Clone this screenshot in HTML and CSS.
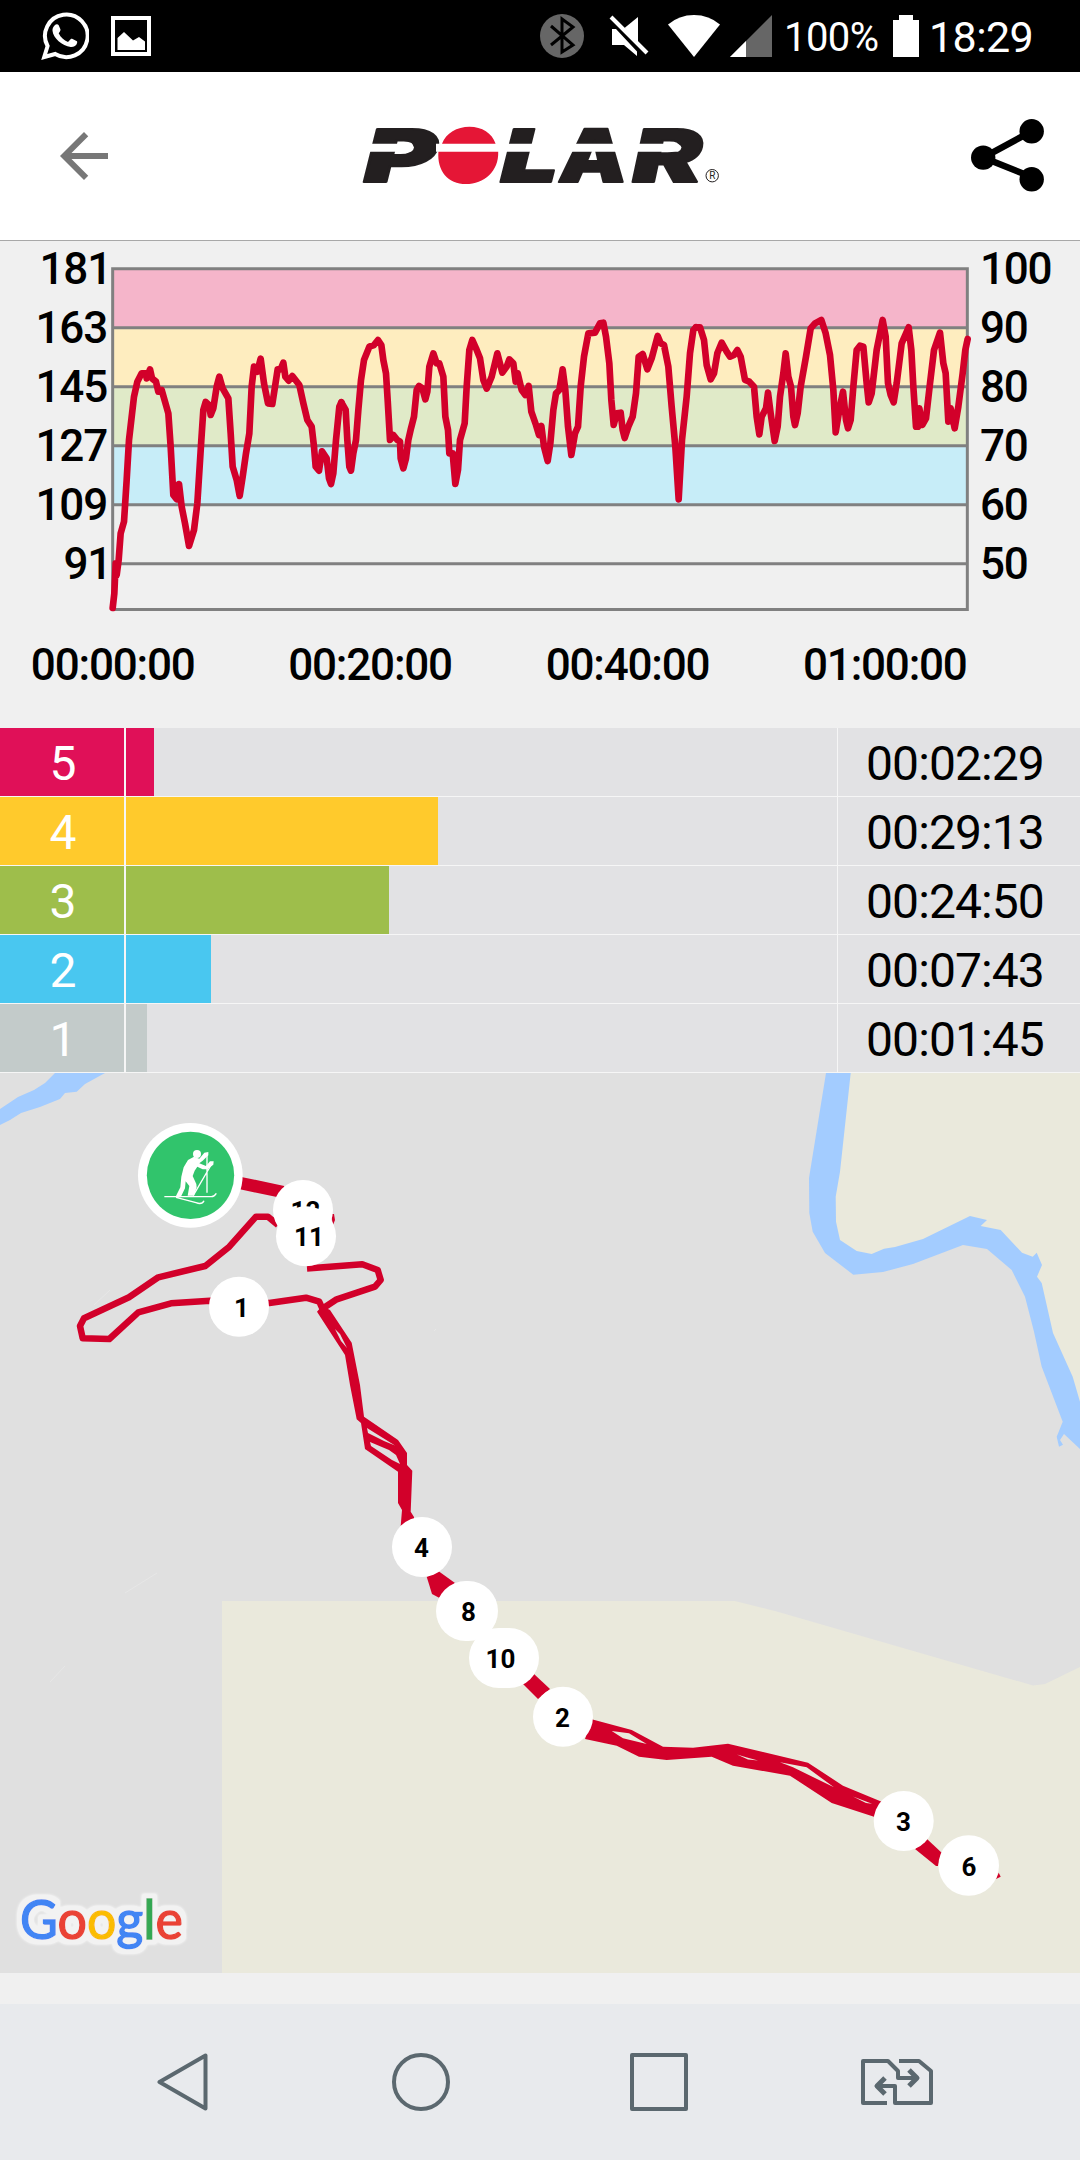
FILE: index.html
```html
<!DOCTYPE html>
<html lang="en">
<head>
<meta charset="utf-8">
<title>Polar training session</title>
<link rel="stylesheet" href="styles.css">
</head>
<body>
<div class="screen">
  <div class="status-bar">
    <div class="status-left">
      <svg class="whatsapp" width="48" height="48" viewBox="0 0 48 48">
        <path d="M3.2 45 6.6 34A21.3 21.3 0 1 1 14.200 42Z" fill="none" stroke="#fff" stroke-width="4"/>
        <path d="M13.500 13.500c1.500-1.800 3.500-1.700 4.200-.2l1.700 4c.4 1-.2 2-1.700 3.900 2 4.200 5.200 7.200 9.300 8.800l2.600-2.800c.6-.7 1.200-.6 2-.2l3.900 2c.8.4.8 1 .6 2-.6 2.700-3.600 4.200-6.400 4-8.500-1-17.600-9-18.200-16.200-.1-2 .5-3.800 2-5.300Z" fill="#fff"/>
      </svg>
      <svg class="gallery" width="40" height="40" viewBox="0 0 40 40">
        <path d="M2 2h36v36H2Z" fill="none" stroke="#fff" stroke-width="4"/>
        <path d="M6.500 34V22L13 16l9 8.500 6-3.500 6 4.500V34Z" fill="#fff"/>
      </svg>
    </div>
    <div class="status-right">
      <svg width="44" height="44" viewBox="0 0 44 44">
        <circle cx="22" cy="22" r="22" fill="#666"/>
        <path d="M11 12 33 31 22 38V5l11 8L11 31" fill="none" stroke="#000" stroke-width="3"/>
      </svg>
      <svg class="mute" width="40" height="42" viewBox="0 0 40 42">
        <path d="M3 14h4l21 22.500v4.500L15 30H3Z" fill="#fff"/>
        <path d="M29 2v26L15.500 13Z" fill="#fff"/>
        <path d="M2 2 38 38" stroke="#fff" stroke-width="4"/>
      </svg>
      <svg class="wifi" width="52" height="42" viewBox="0 0 52 42">
        <path d="M26 42 0 9.500Q11 0 26 0T52 9.500Z" fill="#fff"/>
      </svg>
      <svg class="signal" width="42" height="42" viewBox="0 0 42 42">
        <path d="M0 42 42 0V42Z" fill="#666"/><path d="M0 42 16 26V42Z" fill="#fff"/>
      </svg>
      <span class="percent">100%</span>
      <svg class="battery" width="26" height="42" viewBox="0 0 26 42">
        <path d="M0 5H6V0H20V5H26V42H0Z" fill="#fff"/>
      </svg>
      <span class="clock">18:29</span>
    </div>
  </div>

  <header class="app-bar">
    <svg class="back" width="72" height="72" viewBox="0 0 24 24"><path d="M20 11H7.830l5.590-5.590L12 4l-8 8 8 8 1.410-1.410L7.830 13H20Z" fill="#777"/></svg>
    <svg class="logo" width="362" height="64" viewBox="360 124 362 64">
      <g class="wordmark">
        <text transform="translate(359 182) skewX(-14) scale(1.250 1)" textLength="58" lengthAdjust="spacingAndGlyphs">P</text>
        <text transform="translate(496 182) skewX(-14) scale(1.250 1)" textLength="46" lengthAdjust="spacingAndGlyphs">L</text>
        <text transform="translate(557 182) skewX(-6) scale(1.250 1)" textLength="54" lengthAdjust="spacingAndGlyphs">A</text>
        <text transform="translate(628 182) skewX(-12) scale(1.250 1)" textLength="56" lengthAdjust="spacingAndGlyphs">R</text>
      </g>
      <path d="M358 143.700H411Q417 147.500 411 151.700H358ZM436 143.700H678Q685 147.500 678 151.700H436Z" fill="#fff"/>
      <path d="M442 143.700C446 133 457 126.700 469.500 126.700S492 133 495.600 143.700ZM438.400 151.700H498.200C499 171 484 184 466 184S437 171 438.400 151.700Z" fill="#e51636"/>
      <circle cx="712.200" cy="175.700" r="6.200" fill="none" stroke="#231f20" stroke-width="1"/>
      <text class="reg" x="712.300" y="179.300" text-anchor="middle">R</text>
    </svg>
    <svg class="share" width="76" height="76" viewBox="968 118 76 76">
      <path d="M1031.700 131.300 983.200 157.600 1031.700 177" fill="none" stroke="#000" stroke-width="6.500"/>
      <circle cx="983.200" cy="157.600" r="12.200"/><circle cx="1031.700" cy="131.300" r="12.200"/><circle cx="1031.700" cy="179.300" r="12.200"/>
    </svg>
  </header>

  <section class="chart">
    <div class="chart-body">
      <div class="axis axis-left"><span class="flush">181</span><span>163</span><span>145</span><span>127</span><span>109</span><span class="flush">91</span></div>
      <svg class="plot" width="858" height="344" viewBox="333 81 2574 1032">
        <path d="M338 86H2902V263H338Z" fill="#f5b5ca"/>
        <path d="M338 263H2902V440H338Z" fill="#feedbf"/>
        <path d="M338 440H2902V617H338Z" fill="#e0eac8"/>
        <path d="M338 617H2902V794H338Z" fill="#c7edf8"/>
        <path d="M338 794H2902V971H338Z" fill="#eeefee"/>
        <path d="M338 86H2902V1108.500H338ZM338 263H2902M338 440H2902M338 617H2902M338 794H2902M338 971H2902" fill="none" stroke="#808080" stroke-width="9"/>
        <g class="pulse">
          <polyline points="338,1104 343,1060 347,970 350,1005 356,960 362,880 372,845 380,720 387,600 402,470 412,425 425,400 438,400 440,415 450,388 456,415 468,425 475,455 485,450 495,485 505,520 512,620 520,765 530,778 537,732 545,800 555,850 567,918 582,870 592,790 604,600 610,510 617,486 627,495 632,525 640,505 650,440 658,410 668,445 685,475 692,580 698,680 710,720 719,768 728,710 738,640 748,580 755,440 762,380 772,395 782,356 792,430 804,490 817,492 825,440 833,388 842,388 850,368 856,410 866,422 877,408 898,435 910,490 922,540 935,560 942,620 947,680 957,692 966,634 980,655 987,715 993,732 1000,700 1008,600 1018,500 1024,487"/>
          <polyline transform="translate(1020 0)" points="4,487 17,510 22,600 28,680 33,692 40,640 48,600 55,510 63,420 72,360 88,320 102,315 114,300 124,315 130,360 138,400 143,480 150,600 160,585 172,600 180,605 182,655 190,685 198,655 205,600 213,565 222,530 230,450 237,438 247,445 256,478 262,455 268,380 280,340 290,370 298,370 310,410 316,530 324,570 328,640 338,640 346,732 354,690 360,600 374,550 380,440 388,330 397,300 408,325 420,355 430,420 440,446 455,410 472,340 487,398 500,380 508,358 520,370 527,425 533,400 545,450 556,465 566,438 574,515 588,555 597,585 604,558 612,620 623,663 631,610 640,510 648,460 658,450 668,388 676,450 684,560 694,645 705,580 714,560 722,440 732,350 745,280 765,278 780,250 790,248 798,290 808,370 814,480 821,555 830,520 842,518 848,570 854,594 865,560 878,530 888,460 896,350 908,342 922,388 935,355 953,288 962,310 972,315 985,380 995,500 1006,620 1016,778 1026,600 1040,470 1050,340 1060,270 1068,262"/>
          <polyline transform="translate(2040 0)" points="48,262 60,262 72,300 80,375 92,418 102,400 112,340 125,308 140,335 150,350 162,345 172,330 182,350 195,420 208,425 222,440 230,530 238,583 245,530 258,505 264,458 272,520 284,603 293,560 300,470 310,400 317,340 325,410 333,440 340,530 345,555 353,520 362,440 378,350 392,265 405,250 424,240 437,280 450,345 460,450 467,577 478,510 489,455 498,540 504,565 512,540 520,440 530,330 540,317 550,320 560,430 566,487 575,460 590,330 608,240 617,290 624,430 632,465 641,487 650,430 665,310 686,262 694,330 700,440 708,560 714,560 718,505 727,555 738,535 750,430 762,330 780,278 790,370 797,400 805,545 812,505 824,565 835,500 848,400 856,330 863,297"/>
        </g>
      </svg>
      <div class="axis axis-right"><span>100</span><span>90</span><span>80</span><span>70</span><span>60</span><span>50</span></div>
    </div>
    <div class="times"><span>00:00:00</span><span>00:20:00</span><span>00:40:00</span><span>01:00:00</span></div>
  </section>

  <section class="zones">
    <div class="zone z5"><div class="num">5</div><div class="track"><div class="bar" style="width:28px"></div></div><div class="dur">00:02:29</div></div>
    <div class="zone z4"><div class="num">4</div><div class="track"><div class="bar" style="width:312px"></div></div><div class="dur">00:29:13</div></div>
    <div class="zone z3"><div class="num">3</div><div class="track"><div class="bar" style="width:263px"></div></div><div class="dur">00:24:50</div></div>
    <div class="zone z2"><div class="num">2</div><div class="track"><div class="bar" style="width:85px"></div></div><div class="dur">00:07:43</div></div>
    <div class="zone z1"><div class="num">1</div><div class="track"><div class="bar" style="width:21px"></div></div><div class="dur">00:01:45</div></div>
  </section>

  <svg class="map" width="1080" height="900" viewBox="0 1073 1080 900">
    <defs>
      <filter id="halo" x="-10%" y="-25%" width="120%" height="150%">
        <feMorphology in="SourceAlpha" operator="dilate" radius="3.500" result="d"/>
        <feGaussianBlur in="d" stdDeviation="1.500" result="b"/>
        <feComponentTransfer in="b" result="a"><feFuncA type="linear" slope="2.500"/></feComponentTransfer>
        <feFlood flood-color="#f2f2f2"/><feComposite in2="a" operator="in" result="h"/>
        <feMerge><feMergeNode in="h"/><feMergeNode in="SourceGraphic"/></feMerge>
      </filter>
    </defs>
    <path d="M0 1073H1080V1973H0Z" fill="#e0e0e0"/>
    <path d="M222 1601H735L775 1611 1033 1685.500 1045 1684 1080 1667V1973H222Z" fill="#eae9dc"/>
    <path d="M845 1073H1080V1410L1045 1320 1030 1260 990 1235 930 1245 860 1260 830 1235 825 1180Z" fill="#eae9dc"/>
    <g fill="#a3ccff">
      <path d="M826 1073 809 1178 809.300 1213 812.700 1231.700 825 1253 853.300 1274.700 883 1272 913 1264 963 1245 987 1249 1011.700 1270 1025 1296.700 1034 1331.700 1041.700 1366.700 1062.700 1421.700 1056.700 1436.700 1059 1446.700 1063 1444.700 1060 1440 1064 1434 1080 1449V1401.700L1072.700 1376.700 1053 1333 1041.700 1283 1037 1276.700 1042 1265 1036.700 1252.700 1032.700 1256.700 1022 1252.700 1000.700 1230 980.700 1226 987 1220 970 1216 923 1239 895 1247 884 1248.700 871.700 1254 856.700 1251 840 1240 836 1221.700 835.700 1196.700 840 1171.700 850.700 1073Z"/>
      <path d="M55 1073 45 1083 34 1090 18 1097 0 1109V1125L10 1120 21 1113 40 1107 60 1099 65 1093 76.700 1091.700 85 1084 105 1073Z"/>
    </g>
    <g fill="none" stroke="#d2002a" stroke-width="6.500" stroke-linejoin="round">
      <path d="M278 1225 268 1216.700H256L229.300 1246.700 205.300 1266 158.300 1277.300 129 1297.300 84 1318.300 80 1326 82.700 1338.300 109.300 1339 138.300 1312.300 171 1303.300 210 1300.700 269.300 1303 306 1297.700 319.300 1301.700 323 1310"/>
      <path d="M307 1268.500 362.300 1264.300 377.700 1270 380.700 1280 375 1286.700 336.700 1299.300 322 1309"/>
    </g>
    <path d="M240 1183 283 1192" stroke="#d2002a" stroke-width="12.500"/>
    <g fill="#d2002a">
      <path d="M331 1214 334 1214 335 1220 333 1225Z"/>
      <path fill-rule="evenodd" d="M317 1311.700 345 1355 350 1385 356.700 1419.300 361 1423 365 1449 398 1471.700V1503L402 1510 400.700 1526H414V1517L410.700 1511.700 412.300 1470.700 407 1465V1453L398 1440 364 1416.700 360 1385 351.700 1342.700 330 1310 322 1306ZM335 1329 340 1334 347 1348 341 1341ZM367 1428 383 1438 395 1445.500 384 1441 368 1433ZM370 1442 389 1450 396 1455 400 1464 392 1460 371 1446Z"/>
      <path d="M426.700 1576.700 438.300 1571 455 1583 439 1597.700 432 1594Z"/>
      <path d="M523 1684 534 1674 550 1689 538 1699Z"/>
      <path fill-rule="evenodd" d="M591.700 1719.300 631.700 1730 663 1746.700 693 1747.700 728 1743.700 808 1762.700 843 1785.700 881.700 1801.700 874 1816.700 831.700 1803 790 1775.700 733 1765.700 711.700 1756.700 666.700 1760 639 1756.700 616.700 1745.700 585 1739ZM611.700 1731 629 1733.300 646.700 1744 623 1738.300ZM737 1754.500 747 1757.500 758 1760.500 748 1759.500ZM780 1762.300 806.700 1767.300 834 1787.300 793 1767.300ZM853 1796.500 872 1803.800 866 1803Z"/>
      <path d="M915 1849 927 1839 941.700 1852.700 938 1866 936 1866Z"/>
      <path d="M998.700 1872.700 1000.700 1876.700 996 1879Z"/>
    </g>
    <g stroke="#e7e7e7" stroke-width="1"><path d="M94 1305 110 1290M434 1331 436 1329M50 1682 65 1666M125 1593 157 1573"/></g>
    <g class="markers" text-anchor="middle">
      <circle cx="303" cy="1210" r="30"/><text x="305.500" y="1219.500">12</text>
      <circle cx="306" cy="1236.300" r="30"/><text x="309" y="1246">11</text>
      <circle cx="239" cy="1306.700" r="30"/><text x="241.500" y="1317">1</text>
      <circle cx="422" cy="1547" r="30"/><text x="421.500" y="1557">4</text>
      <rect x="436" y="1581" width="62" height="60" rx="30"/><text x="468.500" y="1621">8</text>
      <rect x="469" y="1628" width="70" height="60" rx="30"/><text x="500.500" y="1668">10</text>
      <circle cx="563" cy="1716.700" r="30"/><text x="562.500" y="1727">2</text>
      <circle cx="903.700" cy="1821" r="30"/><text x="903.500" y="1831">3</text>
      <circle cx="968.700" cy="1865.500" r="30.300"/><text x="969" y="1875.500">6</text>
    </g>
    <g transform="translate(60 1080) scale(.33333)">
      <circle cx="391" cy="286" r="157" fill="#fff"/><circle cx="391.500" cy="286" r="131" fill="#31c46c"/>
      <g fill="#fff">
        <circle cx="411" cy="222" r="12"/>
        <path d="M402 230 418 236 433 218 445 216V226L428 242 418 250 438 258 450 244 461 244 460 254 442 268 428 268 412 260 404 272 398 288 409 312 410 322 402 347 383 347 388 318 377 304 375 325 362 352 348 348 361 322 364 290 371 262 384 240Z"/>
      </g>
      <g fill="none" stroke="#fff" stroke-width="4"><path d="M441 220V338M455 252 400 346M313 350H454Q463 350 469 340M348 352 408 368Q426 375 432 362"/></g>
    </g>
    <g class="google" filter="url(#halo)">
      <text x="20" y="1938.500" textLength="163" lengthAdjust="spacingAndGlyphs"><tspan class="blue">G</tspan><tspan class="red">o</tspan><tspan class="yellow">o</tspan><tspan class="blue">g</tspan><tspan class="green">l</tspan><tspan class="red">e</tspan></text>
    </g>
  </svg>

  <nav class="nav-bar">
    <svg width="52" height="60" viewBox="0 0 52 60"><path d="M48.500 3.500V56.500L2.500 30Z"/></svg>
    <svg class="home" width="60" height="60" viewBox="0 0 60 60"><circle cx="30" cy="30" r="27"/></svg>
    <svg class="recent" width="60" height="60" viewBox="0 0 60 60"><path d="M3 3H57V57H3Z"/></svg>
    <svg class="sim" width="72" height="46" viewBox="0 0 72 46"><path d="M26 44H2V2H27L37 12V19H54M38 2H58L70 12V44H34V27H17"/><path class="head" d="M48 11 56 19 48 27M24 19 16 27 24 35"/></svg>
  </nav>
</div>
</body>
</html>
```
FILE: styles.css
```css
* { box-sizing: border-box; }
body { margin: 0; background: #f0f0f0; font-family: Roboto, sans-serif; color: #000; }
svg { display: block; flex: none; }
.screen { width: 1080px; height: 2160px; display: flex; flex-direction: column; overflow: hidden; }

.status-bar { height: 72px; background: #000; color: #fff; display: flex; justify-content: space-between; align-items: center; padding: 0 46px 0 41px; }
.status-left { display: flex; gap: 22px; align-items: center; }
.status-right { display: flex; align-items: center; white-space: nowrap; }
.mute { margin-left: 25px; }
.wifi { margin-left: 19px; }
.signal { margin-left: 10px; }
.percent { font-size: 40px; letter-spacing: -0.6px; width: 96px; margin: 3px 0 0 12px; }
.battery { margin-left: 13px; }
.clock { font-size: 43px; letter-spacing: -0.6px; width: 105px; margin: 2px 0 0 10px; }

.app-bar { height: 169px; background: #fff; border-bottom: 1px solid #a8a8a8; display: flex; align-items: center; justify-content: space-between; padding: 0 36px 0 48px; }
.logo { margin-left: -6px; overflow: visible; }
.wordmark { font-family: Inter, sans-serif; font-weight: 900; font-size: 73px; fill: #231f20; stroke: #231f20; stroke-width: 2px; stroke-linejoin: round; }
.reg { font-size: 10px; fill: #231f20; }

.chart { height: 487px; font-weight: 500; font-size: 44px; letter-spacing: -1.2px; }
.chart-body { display: flex; height: 370px; }
.plot { margin-top: 26px; overflow: visible; }
.axis { display: flex; flex-direction: column; line-height: 59px; margin-top: -1px; }
.axis-left { width: 111px; padding-right: 4px; text-align: right; }
.flush { margin-right: -4px; }
.axis-right { padding-left: 11px; }
.pulse { fill: none; stroke: #d2002a; stroke-width: 20; stroke-linejoin: round; stroke-linecap: round; }
.times { display: flex; margin: 26px 0 0 -16px; line-height: 56px; }
.times span { width: 257.400px; text-align: center; }

.zones { font-size: 48px; letter-spacing: -0.9px; }
.zone { display: flex; height: 69px; border-bottom: 1px solid #f6f6f6; background: #e2e2e4; line-height: 71px; }
.num { width: 126px; padding-left: 1px; border-right: 2px solid #f6f6f6; color: #fff; text-align: center; background: var(--zone); }
.track { width: 712px; border-right: 1px solid #f6f6f6; }
.bar { height: 68px; background: var(--zone); }
.dur { flex: 1; padding-left: 28px; }
.z5 { --zone: #e01058; }
.z4 { --zone: #ffca2c; }
.z3 { --zone: #9ebe4b; }
.z2 { --zone: #49c7f0; }
.z1 { --zone: #c3cbca; }

.markers { fill: #fff; font-weight: 700; font-size: 26px; }
.markers text { fill: #000; }
.google { font-family: Lato, sans-serif; font-size: 55px; stroke-width: 1.500px; }
.blue { fill: #4285f4; stroke: #4285f4; }
.red { fill: #ea4335; stroke: #ea4335; }
.yellow { fill: #fbbc05; stroke: #fbbc05; }
.green { fill: #34a853; stroke: #34a853; }

.nav-bar { height: 156px; margin-top: 31px; background: #e8eaed; display: flex; align-items: center; padding-left: 157px; }
.nav-bar svg { fill: none; stroke: #5b686f; stroke-width: 4; stroke-linejoin: round; }
.nav-bar .head { stroke-width: 5; }
.home { margin-left: 182px; }
.recent { margin-left: 178px; }
.sim { margin-left: 172px; }
```
